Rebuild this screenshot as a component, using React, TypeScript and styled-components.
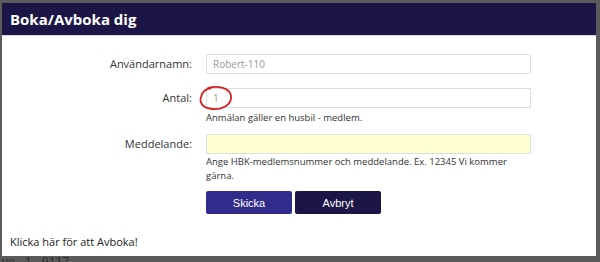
import React from 'react';
import styled, { createGlobalStyle } from 'styled-components';

const GlobalStyle = createGlobalStyle`
    html, body {
        margin: 0;
        padding: 0;
        width: 600px;
        height: 262px;
        overflow: hidden;
        background: #5b5b5b;
    }
    * { box-sizing: border-box; }
`;

const Backdrop = styled.div`
    width: 600px;
    height: 262px;
    overflow: hidden;
    background: #5b5b5b;
    padding: 3px 4px 0 2px;
    display: flex;
    flex-direction: column;
`;

const Modal = styled.div`
    width: 594px;
    height: 253px;
    flex-shrink: 0;
    overflow: hidden;
    background: #ffffff;
    display: flex;
    flex-direction: column;
`;

const Header = styled.div`
    height: 33px;
    flex-shrink: 0;
    background: #1c1646;
    border-bottom: 1px solid #d8d8e4;
    display: flex;
    align-items: center;
    padding-left: 8px;
    font-family: "Open Sans", "Liberation Sans", sans-serif;
    font-weight: 700;
    font-size: 15px;
    color: #ffffff;
`;

const Form = styled.div`
    display: grid;
    grid-template-columns: 190px 325px;
    column-gap: 14px;
    padding-top: 18px;
    font-family: "Open Sans", "Liberation Sans", sans-serif;
`;

const Label = styled.div<{ $top?: number }>`
    justify-self: end;
    align-self: start;
    margin-top: ${p => p.$top ?? 0}px;
    height: 20px;
    line-height: 20px;
    font-size: 11px;
    color: #333;
`;

const Field = styled.div<{ $top?: number }>`
    position: relative;
    margin-top: ${p => p.$top ?? 0}px;
`;

const Input = styled.div<{ $yellow?: boolean }>`
    height: 20px;
    border: 1px solid #dedede;
    background: ${p => (p.$yellow ? '#ffffd2' : '#ffffff')};
    padding-left: 6px;
    line-height: 18px;
    font-size: 10px;
    color: #9a9a9a;
`;

const Help = styled.div<{ $top?: number }>`
    margin-top: ${p => p.$top ?? 3}px;
    font-size: 9.5px;
    line-height: 14px;
    color: #333;
`;

const Circle = styled.svg`
    position: absolute;
    left: -9px;
    top: -3px;
`;

const Buttons = styled.div`
    display: flex;
    gap: 3px;
    margin-top: 8px;
`;

const Button = styled.div<{ $dark?: boolean }>`
    width: 86px;
    height: 23px;
    border-radius: 2px;
    background: ${p => (p.$dark ? '#1c1646' : '#312b8c')};
    color: #fff;
    font-family: "Liberation Sans", Arial, sans-serif;
    font-size: 11px;
    display: flex;
    align-items: center;
    justify-content: center;
`;

const Footer = styled.div`
    margin-top: 20px;
    padding-left: 8px;
    font-family: "Open Sans", "Liberation Sans", sans-serif;
    font-size: 11px;
    color: #222;
`;

const Behind = styled.div`
    font-family: "Open Sans", "Liberation Sans", sans-serif;
    font-size: 12px;
    line-height: 12px;
    color: #2a2a2a;
`;

const App: React.FC = () => {
    return (
        <>
            <GlobalStyle />
            <Backdrop>
                <Modal>
                    <Header>Boka/Avboka dig</Header>
                    <Form>
                        <Label>Användarnamn:</Label>
                        <Field>
                            <Input>Robert-110</Input>
                        </Field>

                        <Label $top={14}>Antal:</Label>
                        <Field $top={14}>
                            <Input>1</Input>
                            {/* red hand-drawn mark around the value */}
                            <Circle width="38" height="27" viewBox="0 0 38 27">
                                <path
                                    d="M11 3 C 21 0, 33 3, 34 11 C 35 20, 25 25, 15 24 C 6 23, 2 18, 4 12 C 5 7, 8 4, 14 3"
                                    fill="none"
                                    stroke="#d81f1f"
                                    strokeWidth="1.8"
                                    strokeLinecap="round"
                                />
                            </Circle>
                            <Help>Anmälan gäller en husbil - medlem.</Help>
                        </Field>

                        <Label $top={9}>Meddelande:</Label>
                        <Field $top={9}>
                            <Input $yellow />
                            <Help $top={1}>Ange HBK-medlemsnummer och meddelande. Ex. 12345 Vi kommer gärna.</Help>
                        </Field>

                        <div />
                        <Buttons>
                            <Button>Skicka</Button>
                            <Button $dark>Avbryt</Button>
                        </Buttons>
                    </Form>
                    <Footer>Klicka här för att Avboka!</Footer>
                </Modal>
                <Behind>ve - 1 - 9117</Behind>
            </Backdrop>
        </>
    );
};

export default App;
